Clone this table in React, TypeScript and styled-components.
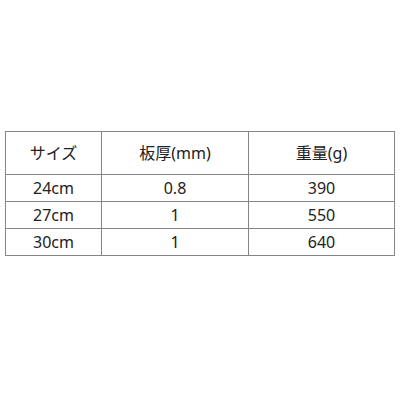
import React from 'react';
import styled, { createGlobalStyle } from 'styled-components';

const Global = createGlobalStyle`
  html, body {
    margin: 0;
    padding: 0;
    background: #ffffff;
  }
`;

const Page = styled.div`
  width: 400px;
  height: 400px;
  padding: 131px 0 0 5px;
  box-sizing: border-box;
`;

const Table = styled.table`
  border-collapse: collapse;
  width: 389px;
  table-layout: fixed;
  font-family: "Noto Sans", "Noto Sans CJK JP", sans-serif;
  font-size: 16px;
  color: #222;
`;

const Cell = styled.td<{ $head?: boolean }>`
  border: 1px solid #858585;
  text-align: center;
  padding: 0;
  height: ${p => (p.$head ? '42px' : '26px')};
  line-height: 1;
`;

const rows = [
  ['24cm', '0.8', '390'],
  ['27cm', '1', '550'],
  ['30cm', '1', '640'],
];

export default function App() {
  return (
    <>
      <Global />
      <Page>
        <Table>
          <colgroup>
            <col style={{ width: 96 }} />
            <col style={{ width: 147 }} />
            <col style={{ width: 146 }} />
          </colgroup>
          <tbody>
            <tr>
              <Cell $head>サイズ</Cell>
              <Cell $head>板厚(mm)</Cell>
              <Cell $head>重量(g)</Cell>
            </tr>
            {rows.map(r => (
              <tr key={r[0]}>
                {r.map((c, i) => (
                  <Cell key={i}>{c}</Cell>
                ))}
              </tr>
            ))}
          </tbody>
        </Table>
      </Page>
    </>
  );
}
